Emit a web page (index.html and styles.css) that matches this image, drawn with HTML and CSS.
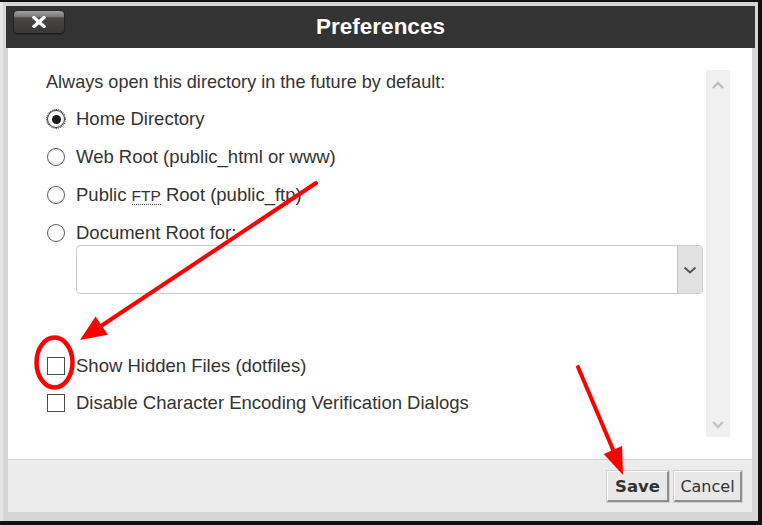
FILE: index.html
```html
<!DOCTYPE html>
<html>
<head>
<meta charset="utf-8">
<title>Preferences</title>
<link rel="stylesheet" href="styles.css">
</head>
<body>
<div class="screen">
  <div class="dialog">
    <div class="titlebar">
      <button class="close" aria-label="Close">
        <svg width="14" height="12" viewBox="0 0 14 12"><path d="M2 1.5 L12 10.5 M12 1.5 L2 10.5" stroke="#fff" stroke-width="3.4" stroke-linecap="square"/></svg>
      </button>
      <h1 class="title">Preferences</h1>
    </div>
    <div class="content">
      <div class="body">
        <div class="form">
          <p class="heading">Always open this directory in the future by default:</p>
          <div class="options">
            <label class="opt"><span class="radio checked"></span><span>Home Directory</span></label>
            <label class="opt"><span class="radio"></span><span>Web Root (public_html or www)</span></label>
            <label class="opt"><span class="radio"></span><span>Public <abbr class="abbr">FTP</abbr> Root (public_ftp)</span></label>
            <label class="opt"><span class="radio"></span><span>Document Root for:</span></label>
          </div>
          <div class="select">
            <span class="select-btn">
              <svg width="14" height="8" viewBox="0 0 14 8"><path d="M1.5 1.5 L7 6.5 L12.5 1.5" fill="none" stroke="#555" stroke-width="2"/></svg>
            </span>
          </div>
          <div class="checks">
            <label class="opt"><span class="check"></span><span>Show Hidden Files (dotfiles)</span></label>
            <label class="opt"><span class="check"></span><span>Disable Character Encoding Verification Dialogs</span></label>
          </div>
        </div>
        <div class="scrollbar">
          <svg width="12" height="8" viewBox="0 0 12 8"><path d="M1 7 L6 2 L11 7" fill="none" stroke="#bdbdbd" stroke-width="2.4"/></svg>
          <svg width="12" height="8" viewBox="0 0 12 8"><path d="M1 1 L6 6 L11 1" fill="none" stroke="#c4c4c4" stroke-width="2.4"/></svg>
        </div>
      </div>
      <div class="footer">
        <button class="btn save">Save</button>
        <button class="btn cancel">Cancel</button>
      </div>
    </div>
  </div>
</div>
<svg class="annotations" width="762" height="525" viewBox="0 0 762 525">
  <line x1="316" y1="183" x2="98" y2="328" stroke="#f00" stroke-width="4" stroke-linecap="round"/>
  <polygon points="80,340 107.8,334.8 95.6,316.4" fill="#f00"/>
  <ellipse cx="54.5" cy="362.5" rx="18" ry="25" fill="none" stroke="#f00" stroke-width="4.5"/>
  <line x1="578" y1="367" x2="614" y2="452" stroke="#f00" stroke-width="4" stroke-linecap="round"/>
  <polygon points="623,475 622.1,446.1 603.7,453.9" fill="#f00"/>
</svg>
</body>
</html>
```

FILE: styles.css
```css
* { box-sizing: border-box; }

html, body {
  margin: 0;
  padding: 0;
}

body {
  background: #111;
  width: 762px;
  height: 525px;
  position: relative;
  overflow: hidden;
  font-family: "Liberation Sans", Arial, sans-serif;
}

.screen {
  margin-top: 2px;
  width: 758px;
  height: 519px;
  background: #e6e6e6;
  display: flex;
}

.dialog {
  margin-left: 3px;
  width: 755px;
  height: 519px;
  background: #d6d6d6;
  padding: 4px 3px 9px 3px;
  display: flex;
  flex-direction: column;
}

.titlebar {
  height: 42px;
  background: #333333;
  display: flex;
  align-items: center;
  position: relative;
  flex-shrink: 0;
}

.close {
  position: absolute;
  left: 8px;
  top: 5px;
  width: 50px;
  height: 22px;
  border: 0;
  border-radius: 4px;
  padding: 0;
  background: linear-gradient(to bottom, #a3a3a3 0%, #7a7a7a 25%, #4b4646 32%, #3c3737 100%);
  box-shadow: 0 1px 2px #141414, 0 0 0 1px #2a2a2a;
  display: flex;
  align-items: center;
  justify-content: center;
}

.close svg { display: block; }

.title {
  flex: 1;
  margin: 0;
  text-align: center;
  color: #fff;
  font-size: 22.5px;
  font-weight: bold;
  line-height: 42px;
}

.content {
  flex: 1;
  margin: 0 3px 0 2px;
  display: flex;
  flex-direction: column;
}

.body {
  height: 411px;
  background: #fff;
  display: flex;
  padding-top: 22px;
  color: #333;
  font-size: 18.5px;
}

.form {
  flex: 1;
  padding-left: 38px;
  padding-right: 3px;
}

.heading {
  margin: 0;
  line-height: 24px;
  font-size: 18.1px;
}

.options {
  margin-top: 13px;
  display: flex;
  flex-direction: column;
  gap: 14px;
}

.opt {
  display: flex;
  align-items: center;
  height: 24px;
  line-height: 24px;
  white-space: nowrap;
}

.radio {
  width: 18px;
  height: 18px;
  margin-left: 1px;
  margin-right: 11px;
  border: 1.5px solid #5c5c5c;
  border-radius: 50%;
  background: #fff;
  display: flex;
  align-items: center;
  justify-content: center;
  flex-shrink: 0;
}

.radio.checked {
  border-color: #333;
  outline: 1px dotted #222;
  outline-offset: 0;
}

.radio.checked::after {
  content: "";
  width: 9px;
  height: 9px;
  border-radius: 50%;
  background: #1a1a1a;
}

.abbr {
  text-decoration: none;
  border-bottom: 1px dotted #555;
  font-size: 15.5px;
  line-height: 16px;
}

.select {
  margin-left: 30px;
  height: 49px;
  border: 1px solid #cccccc;
  border-radius: 4px;
  display: flex;
  justify-content: flex-end;
  overflow: hidden;
}

.select-btn {
  width: 25px;
  background: #e2e2e2;
  border-left: 1px solid #c4c4c4;
  display: flex;
  align-items: center;
  justify-content: center;
}

.checks {
  margin-top: 60px;
  display: flex;
  flex-direction: column;
  gap: 13px;
}

.check {
  width: 18px;
  height: 18px;
  margin-left: 1px;
  margin-right: 11px;
  border: 1.5px solid #4a4a4a;
  background: #fff;
  flex-shrink: 0;
}

.scrollbar {
  width: 24px;
  height: 367px;
  margin-right: 22px;
  background: #f0f0f0;
  display: flex;
  flex-direction: column;
  align-items: center;
  justify-content: space-between;
  padding: 11px 0 8px;
}

.scrollbar svg { display: block; }

.footer {
  height: 53px;
  background: #ececec;
  border-top: 1px solid #d2d2d2;
  display: flex;
  justify-content: flex-end;
  align-items: flex-start;
  padding: 11px 10px 0 0;
  gap: 5px;
}

.btn {
  height: 31px;
  padding: 0;
  font-family: "DejaVu Sans", Verdana, sans-serif;
  font-size: 16px;
  color: #333;
  background: #e8e8e8;
  border-top: 1px solid #fdfdfd;
  border-left: 1px solid #fdfdfd;
  border-right: 2px solid #8e8e8e;
  border-bottom: 2px solid #8e8e8e;
  outline: 1px solid #d0d0d0;
}

.save {
  width: 62px;
  font-weight: bold;
  font-size: 16.5px;
}

.cancel {
  width: 68px;
}

.annotations {
  position: absolute;
  left: 0;
  top: 0;
  pointer-events: none;
}
```
